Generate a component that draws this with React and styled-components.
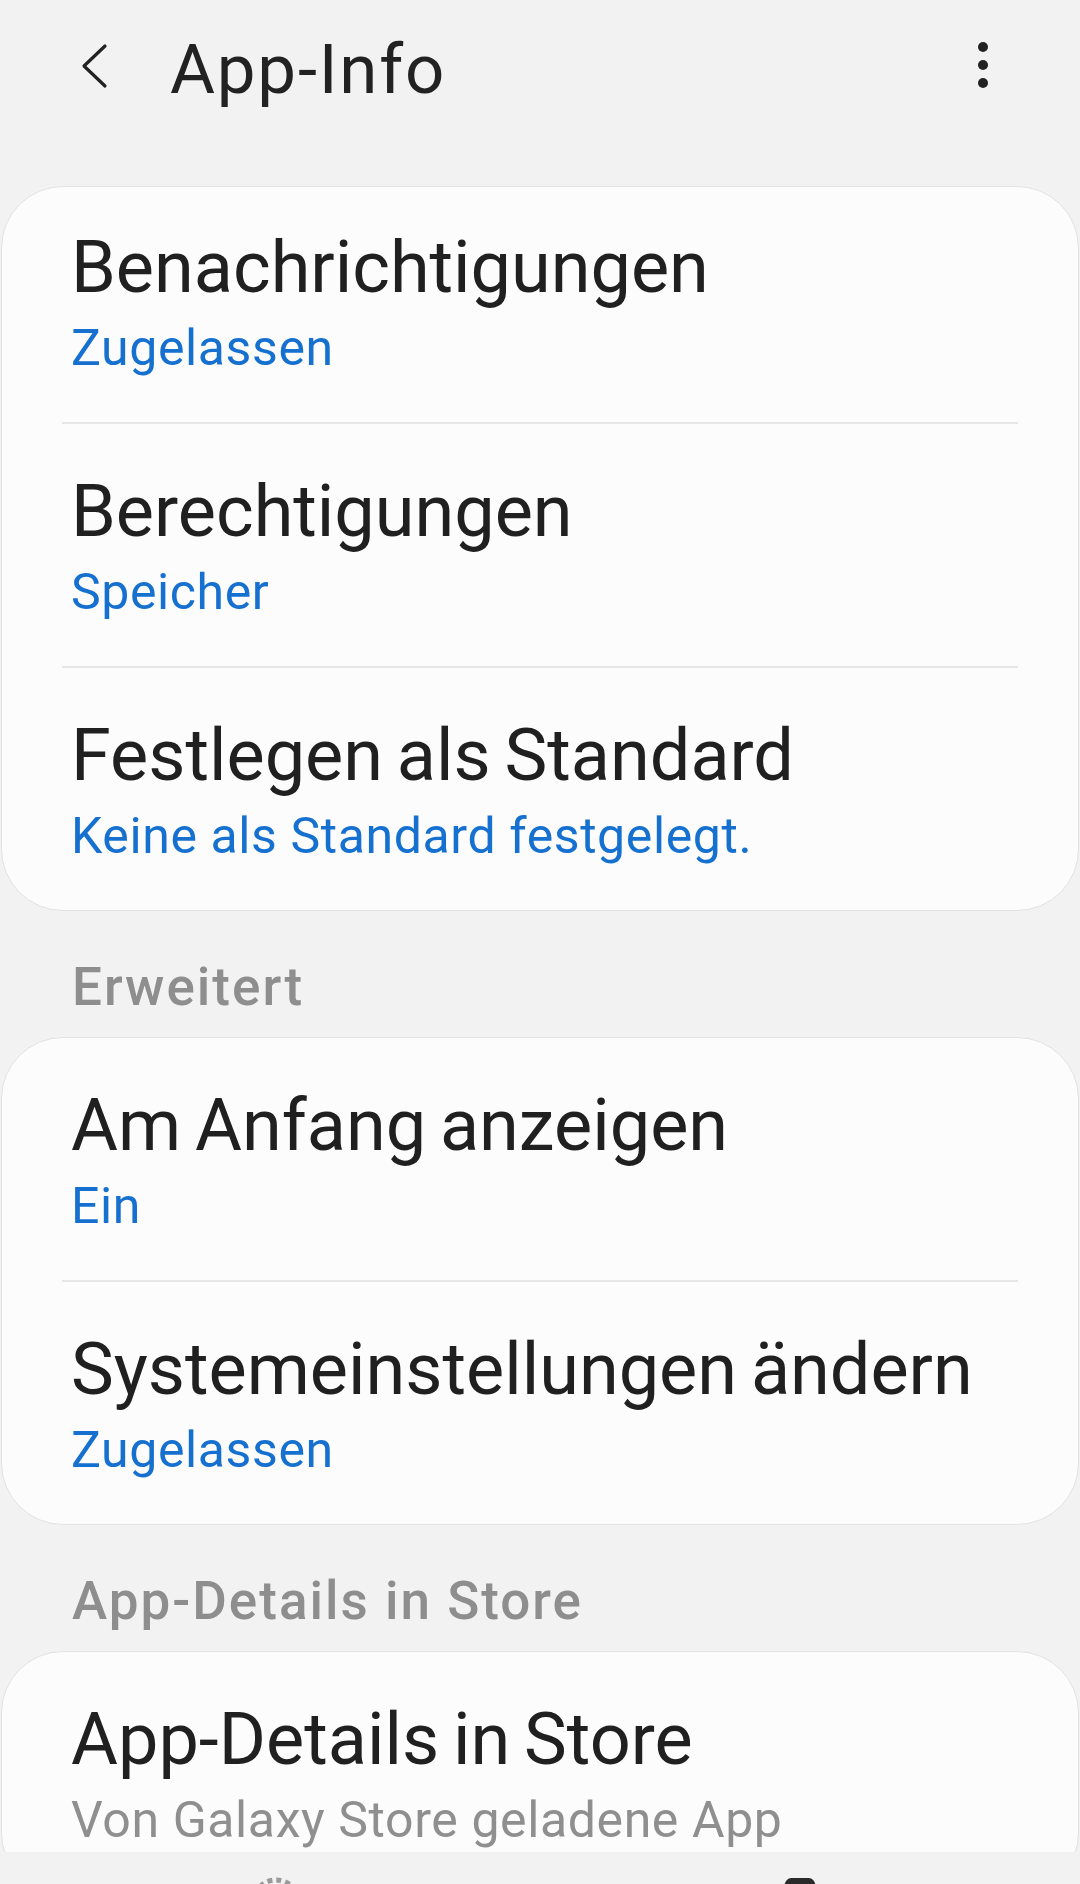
import React from 'react';
import styled, { createGlobalStyle, css } from 'styled-components';

const GlobalStyle = createGlobalStyle`
    html, body {
        margin: 0;
        padding: 0;
        background: #f2f2f2;
    }
    * {
        box-sizing: border-box;
    }
`

const Screen = styled.div`
    width: 1080px;
    height: 1884px;
    display: flex;
    flex-direction: column;
    overflow: hidden;
    background: #f2f2f2;
    font-family: Roboto, "Noto Sans", sans-serif;
    color: #202020;
`

const Header = styled.div`
    display: flex;
    align-items: center;
    height: 80px;
    margin: 30px 0 76px;
    padding: 0 92px 0 80px;
`

const BackButton = styled.svg`
    width: 28px;
    height: 46px;
    margin-bottom: 8px;
    flex-shrink: 0;
`

const Title = styled.h1`
    flex: 1;
    margin: 0 0 0 62px;
    font-size: 69px;
    line-height: 80px;
    font-weight: 400;
    letter-spacing: 1.8px;
    color: #222;
`

const MoreButton = styled.svg`
    width: 10px;
    height: 46px;
    margin-bottom: 10px;
`

const Content = styled.div`
    flex: 1;
    overflow: hidden;
`

const Item = styled.div`
    padding: 46px 40px 44px 69px;
`

const Card = styled.div`
    margin: 0 1px;
    background: #fcfcfc;
    border: 1px solid #e2e2e2;
    border-radius: 62px;
    ${props => props.tight && css`
        ${Item}:first-child {
            padding-top: 39px;
        }
    `}
`

const ItemTitle = styled.div`
    font-size: 72px;
    line-height: 84px;
    word-spacing: -4px;
    color: #202020;
    white-space: nowrap;
`

const ItemValue = styled.div`
    margin-top: 8px;
    font-size: 50px;
    line-height: 60px;
    letter-spacing: 0.6px;
    color: ${props => props.muted ? '#8f8f8f' : '#1570cf'};
    white-space: nowrap;
`

const Divider = styled.div`
    height: 2px;
    margin: 0 60px;
    background: #e6e6e6;
`

const SectionLabel = styled.div`
    padding: 45px 0 19px 72px;
    font-size: 53px;
    line-height: 62px;
    font-weight: 500;
    letter-spacing: 2px;
    color: #8e8e8e;
`

const BottomBar = styled.div`
    height: 32px;
    flex-shrink: 0;
    display: flex;
    justify-content: space-between;
    align-items: flex-start;
    padding: 24px 261px 0 249px;
    overflow: hidden;
    background: #f2f2f2;
`

const NavIcon = styled.svg`
    width: ${props => props.size}px;
    height: ${props => props.size}px;
    flex-shrink: 0;
`

const groups = [
    {
        items: [
            { title: 'Benachrichtigungen', value: 'Zugelassen' },
            { title: 'Berechtigungen', value: 'Speicher' },
            { title: 'Festlegen als Standard', value: 'Keine als Standard festgelegt.' },
        ],
        tight: true,
    },
    {
        label: 'Erweitert',
        items: [
            { title: 'Am Anfang anzeigen', value: 'Ein' },
            { title: 'Systemeinstellungen ändern', value: 'Zugelassen' },
        ],
    },
    {
        label: 'App-Details in Store',
        items: [
            { title: 'App-Details in Store', value: 'Von Galaxy Store geladene App', muted: true },
        ],
    },
]

const App = () => {
    return (
        <Screen>
            <GlobalStyle />
            <Header>
                <BackButton viewBox="0 0 28 46">
                    <path d="M25 3 L4 23 L25 43" fill="none" stroke="#222" strokeWidth="3.2" strokeLinecap="round" strokeLinejoin="round" />
                </BackButton>
                <Title>App-Info</Title>
                <MoreButton viewBox="0 0 10 46">
                    <circle cx="5" cy="5" r="5" fill="#222" />
                    <circle cx="5" cy="23" r="5" fill="#222" />
                    <circle cx="5" cy="41" r="5" fill="#222" />
                </MoreButton>
            </Header>
            <Content>
                {groups.map((group, gi) => (
                    <React.Fragment key={`group-${gi}`}>
                        {group.label && <SectionLabel>{group.label}</SectionLabel>}
                        <Card tight={group.tight}>
                            {group.items.map((item, index) => (
                                <React.Fragment key={`item-${index}`}>
                                    {index > 0 && <Divider />}
                                    <Item>
                                        <ItemTitle>{item.title}</ItemTitle>
                                        <ItemValue muted={item.muted}>{item.value}</ItemValue>
                                    </Item>
                                </React.Fragment>
                            ))}
                        </Card>
                    </React.Fragment>
                ))}
            </Content>
            <BottomBar>
                <NavIcon size={54} viewBox="0 0 54 54">
                    <circle cx="27" cy="27" r="23" fill="none" stroke="#9a9a9a" strokeWidth="5" strokeDasharray="5 4" />
                </NavIcon>
                <NavIcon size={38} viewBox="0 0 38 38">
                    <path d="M10 2 H28 Q31 2 33 5 L37 14 V36 H1 V14 L5 5 Q7 2 10 2 Z" fill="#2a2a2a" />
                </NavIcon>
            </BottomBar>
        </Screen>
    )
}

export default App;
